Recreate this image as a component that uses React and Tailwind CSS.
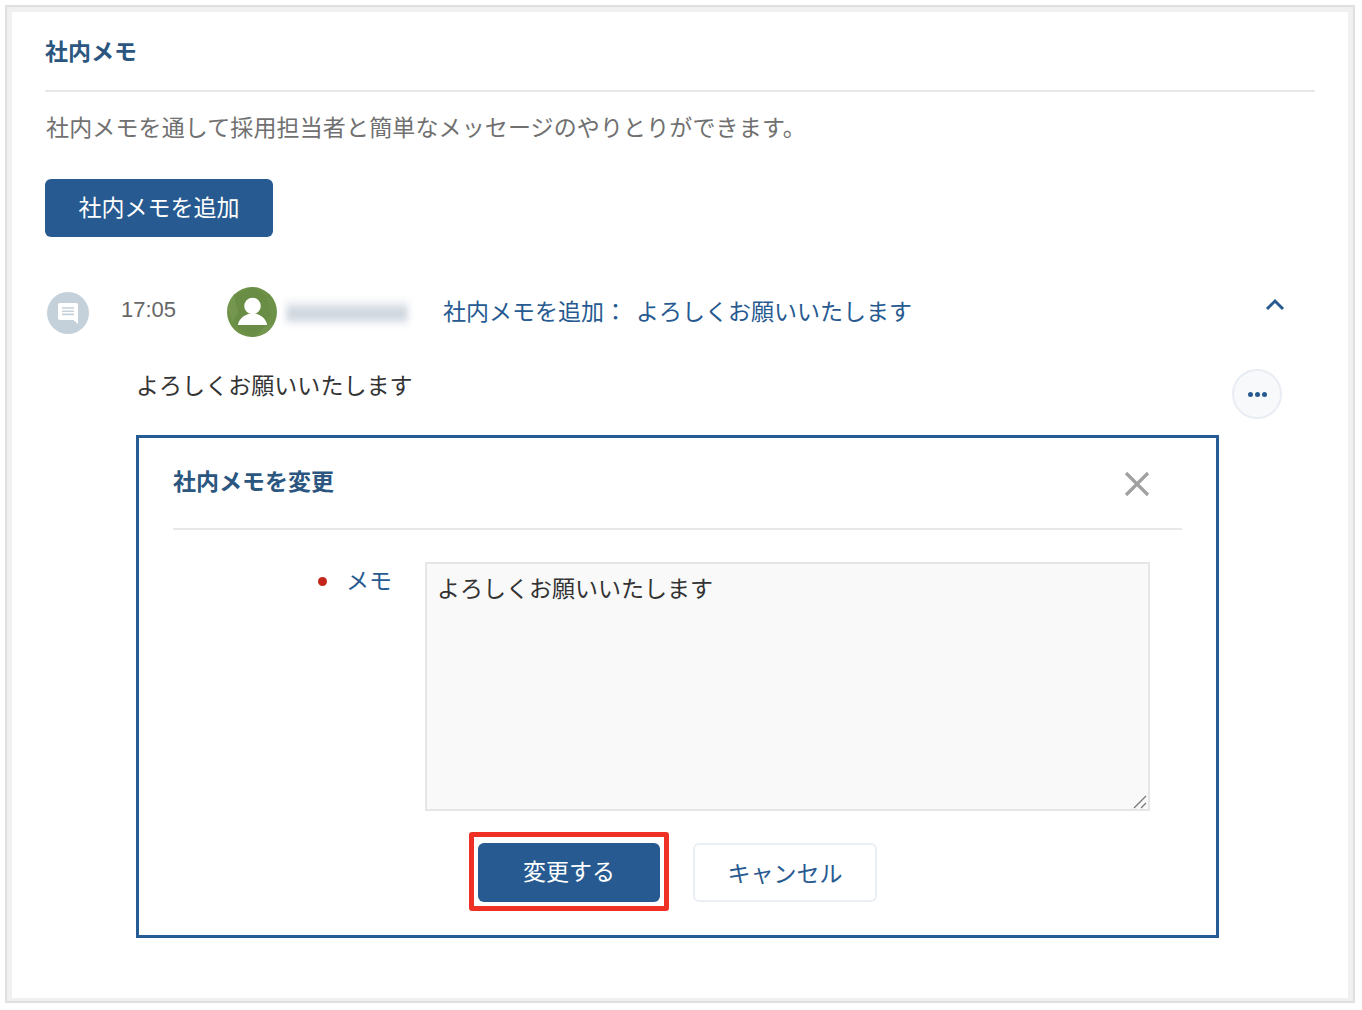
function CommentIcon() {
  return (
    <svg viewBox="0 0 22 22" className="w-[22px] h-[22px]">
      <path d="M3 1h16a2 2 0 0 1 2 2v19l-4.5-4H3a2 2 0 0 1-2-2V3a2 2 0 0 1 2-2z" fill="#fff" />
      <path d="M5 5.2h12v1.6H5zM5 8.4h12v1.6H5zM5 11.6h12v1.6H5z" fill="#c5d1da" />
    </svg>
  );
}

function PersonAvatar() {
  return (
    <div className="w-[50px] h-[50px] rounded-full bg-[#6e9148] overflow-hidden shrink-0">
      <svg viewBox="0 0 50 50" className="w-[50px] h-[50px]">
        <path d="M25 0l14 8 5 17-8 16-11 9-14-9-7-16 5-17z" fill="#6a8d45" />
        <path d="M36 41l14-6v15H30zM0 20l7-12 4 17-5 10z" fill="#74964f" />
        <circle cx="25.5" cy="19" r="8.3" fill="#fff" />
        <path d="M11 38c0-1 .2-2 1-3.500 2.500-5 8-8 13.500-8s11 3 13.500 8c.8 1.500 1 2.500 1 3.500z" fill="#fff" />
      </svg>
    </div>
  );
}

export default function App() {
  return (
    <div className="w-[1362px] h-[1010px] bg-white pt-[5px] pl-[5px] pr-[7px] pb-[5px] font-['Noto_Sans_CJK_JP',sans-serif]">
      <div className="h-[998px] border-2 border-[#dfdfdf]">
        <div className="h-full border-[5px] border-b-[3px] border-[#f0f0f0] pl-[33px] pr-[33px]">
          <h2 className="h-[81px] border-b-2 border-[#e8e8e8] text-[23px] font-bold text-[#2a5680] leading-[78px] -mt-[1px]">
            社内メモ
          </h2>
          <p className="mt-[18px] pl-[1px] text-[23px] tracking-[0.13px] leading-[32px] text-[#707070] whitespace-nowrap">
            社内メモを通して採用担当者と簡単なメッセージのやりとりができます。
          </p>
          <button className="mt-[37px] block w-[228px] h-[58px] rounded-[6px] bg-[#265a90] text-white text-[23px] leading-[48px] pb-[5px]">
            社内メモを追加
          </button>

          <div className="mt-[50px] flex items-start h-[50px] relative">
            <div className="ml-[2px] mt-[5px] w-[42px] h-[42px] rounded-full bg-[#c5d1da] flex items-center justify-center shrink-0">
              <CommentIcon />
            </div>
            <span className="ml-[32px] mt-[9px] w-[106px] shrink-0 text-[22px] leading-[28px] text-[#666666] font-['Liberation_Sans',sans-serif]">
              17:05
            </span>
            <PersonAvatar />
            <div className="ml-[8px] mt-[13px] w-[124px] h-[25px] shrink-0 bg-[#eef1f5] blur-[3px] pt-[7px]">
              <div className="h-[13px] mx-[2px] bg-[#d0d7df]" />
            </div>
            <a className="ml-[34px] mt-[8px] text-[23px] leading-[31px] text-[#265a90] whitespace-nowrap">
              社内メモを追加：<span className="ml-[9px]">よろしくお願いいたします</span>
            </a>
            <svg viewBox="0 0 20 14" className="absolute left-[1220px] top-[10px] w-[20px] h-[14px]" fill="none" stroke="#265a90" strokeWidth="3">
              <path d="M2 12l8-8 8 8" />
            </svg>
          </div>

          <div className="flex mt-[32px] ml-[91px] h-[66px]">
            <p className="w-[1096px] text-[23px] leading-[31px] tracking-[0.05px] text-[#333333] shrink-0">
              よろしくお願いいたします
            </p>
            <div className="w-[50px] h-[50px] shrink-0 rounded-full bg-[#f8f9fb] border-2 border-[#e9edf3] flex items-center justify-center gap-[2px]">
              <span className="w-[5px] h-[5px] rounded-full bg-[#265a90]" />
              <span className="w-[5px] h-[5px] rounded-full bg-[#265a90]" />
              <span className="w-[5px] h-[5px] rounded-full bg-[#265a90]" />
            </div>
          </div>

          <div className="ml-[91px] w-[1083px] h-[503px] border-[3px] border-[#265c94] px-[34px]">
            <div className="h-[92px] border-b-2 border-[#e8e8e8] flex justify-between items-start">
              <h3 className="mt-[26px] text-[23px] leading-[32px] font-bold text-[#2a5680]">社内メモを変更</h3>
              <svg viewBox="0 0 28 28" className="mt-[32px] mr-[31px] w-[28px] h-[28px]" stroke="#a0a0a0" strokeWidth="3.2" fill="none">
                <path d="M3 3l22 22M25 3L3 25" />
              </svg>
            </div>
            <div className="flex mt-[32px]">
              <div className="w-[252px] shrink-0 flex items-start justify-end pr-[33px]">
                <span className="mt-[15px] w-[9px] h-[9px] rounded-full bg-[#c4261b]" />
                <span className="ml-[19px] text-[23px] leading-[34px] text-[#265a90]">メモ</span>
              </div>
              <div className="relative">
                <textarea
                  defaultValue="よろしくお願いいたします"
                  className="block resize-none w-[725px] h-[249px] bg-[#f9f9f9] border-2 border-[#e6e6e6] px-[10px] py-[7px] text-[23px] leading-[32px] text-[#333333] outline-none"
                />
                <svg viewBox="0 0 14 14" className="absolute right-[3px] bottom-[2px] w-[14px] h-[14px]" stroke="#777777" strokeWidth="1.300" fill="none">
                  <path d="M1 13L13 1M8 13l5-5" />
                </svg>
              </div>
            </div>
            <div className="flex items-center mt-[21px] ml-[296px]">
              <div className="w-[200px] h-[79px] border-[5px] border-[#ee3124] rounded-[3px] pt-[1px] flex items-center justify-center">
                <button className="w-[182px] h-[59px] rounded-[6px] bg-[#265a90] text-white text-[23px] pb-[4px]">変更する</button>
              </div>
              <button className="ml-[24px] mt-[2px] w-[184px] h-[59px] rounded-[6px] bg-white border-2 border-[#eaeff6] text-[#265a90] text-[23px]">
                キャンセル
              </button>
            </div>
          </div>
        </div>
      </div>
    </div>
  );
}
